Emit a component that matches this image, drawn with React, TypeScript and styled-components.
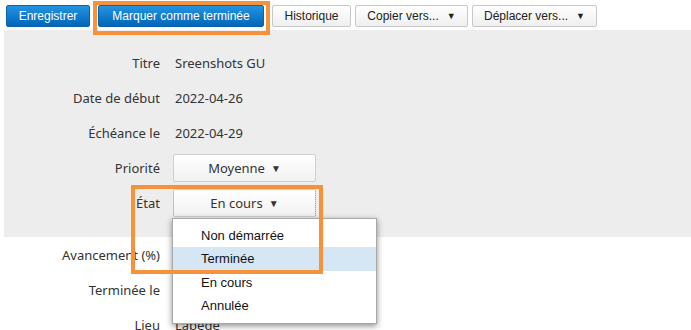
import styled, { createGlobalStyle } from 'styled-components'

const Global = createGlobalStyle`
  body {
    margin: 0;
    background: #fff;
  }
`

const Page = styled.div`
  position: relative;
  width: 691px;
  height: 330px;
  overflow: hidden;
  padding: 5px 0 0 4px;
  box-sizing: border-box;
`

const Toolbar = styled.div`
  display: flex;
  gap: 4px;
  padding-left: 2px;
  height: 22px;
`

const Button = styled.button<{ $w: number; $primary?: boolean; $mx?: number }>`
  width: ${p => p.$w}px;
  height: 22px;
  margin: 0 ${p => p.$mx ?? 0}px;
  padding: 0;
  box-sizing: border-box;
  border-radius: 2px;
  font-family: 'Liberation Sans', Arial, sans-serif;
  font-size: 12px;
  display: flex;
  align-items: center;
  justify-content: center;
  gap: 8px;
  cursor: pointer;
  ${p =>
    p.$primary
      ? `
    color: #fff;
    border: 1px solid #0b62ad;
    background: linear-gradient(#2394e0, #0166b8);
  `
      : `
    color: #222;
    border: 1px solid #c8c8c8;
    background: linear-gradient(#ffffff, #efefef);
  `}
`

const Arrow = styled.span<{ $size?: number }>`
  font-size: ${p => p.$size ?? 9}px;
  line-height: 1;
`

const Panel = styled.div`
  margin-top: 3px;
  background: #ededed;
  padding: 15px 0 17px;
`

const Row = styled.div`
  display: grid;
  grid-template-columns: 156px 1fr;
  column-gap: 13px;
  align-items: center;
  height: 35px;
  font-family: 'Noto Sans', 'Open Sans', sans-serif;
  font-size: 13px;
  color: #333;
`

const Label = styled.div`
  text-align: right;
`

const Value = styled.div`
  padding-left: 2px;
`

const SelectWrap = styled.div`
  position: relative;
  width: 143px;
`

const Select = styled.div<{ $focused?: boolean }>`
  height: 28px;
  box-sizing: border-box;
  border: 1px solid #cfcfcf;
  border-radius: 2px;
  background: linear-gradient(#ffffff, #f1f1f1);
  display: flex;
  align-items: center;
  justify-content: center;
  gap: 6px;
  color: #333;
  ${p =>
    p.$focused &&
    `
    border-left: 1px dotted #888;
    border-right: 1px dotted #888;
  `}
`

const Menu = styled.div`
  position: absolute;
  top: 29px;
  left: -1px;
  width: 205px;
  background: #fff;
  border: 1px solid #a9a9a9;
  box-shadow: 0 2px 6px rgba(0, 0, 0, 0.45);
  padding: 5px 0;
  box-sizing: border-box;
  z-index: 2;
`

const Item = styled.div<{ $active?: boolean }>`
  height: 23.5px;
  display: flex;
  align-items: center;
  padding-left: 28px;
  font-family: 'Liberation Sans', Arial, sans-serif;
  font-size: 13px;
  color: #111;
  background: ${p => (p.$active ? '#d5e7f5' : 'transparent')};
`

const Highlight = styled.div<{ $x: number; $y: number; $w: number; $h: number }>`
  position: absolute;
  left: ${p => p.$x}px;
  top: ${p => p.$y}px;
  width: ${p => p.$w}px;
  height: ${p => p.$h}px;
  box-sizing: border-box;
  border: 4px solid #f7923a;
  z-index: 3;
  pointer-events: none;
`

const states = ['Non démarrée', 'Terminée', 'En cours', 'Annulée']

export default function App() {
  return (
    <Page>
      <Global />
      <Toolbar>
        <Button $w={84} $primary>
          Enregistrer
        </Button>
        <Button $w={166} $primary $mx={4}>
          Marquer comme terminée
        </Button>
        <Button $w={79}>Historique</Button>
        <Button $w={113}>
          Copier vers... <Arrow>▼</Arrow>
        </Button>
        <Button $w={125}>
          Déplacer vers... <Arrow>▼</Arrow>
        </Button>
      </Toolbar>
      <Panel>
        <Row>
          <Label>Titre</Label>
          <Value>Sreenshots GU</Value>
        </Row>
        <Row>
          <Label>Date de début</Label>
          <Value>2022-04-26</Value>
        </Row>
        <Row>
          <Label>Échéance le</Label>
          <Value>2022-04-29</Value>
        </Row>
        <Row>
          <Label>Priorité</Label>
          <SelectWrap>
            <Select>
              Moyenne <Arrow $size={10}>▼</Arrow>
            </Select>
          </SelectWrap>
        </Row>
        <Row>
          <Label>État</Label>
          <SelectWrap>
            <Select $focused>
              En cours <Arrow $size={10}>▼</Arrow>
            </Select>
            <Menu>
              {states.map(s => (
                <Item key={s} $active={s === 'Terminée'}>
                  {s}
                </Item>
              ))}
            </Menu>
          </SelectWrap>
        </Row>
      </Panel>
      <Row>
        <Label>Avancement (%)</Label>
        <Value />
      </Row>
      <Row>
        <Label>Terminée le</Label>
        <Value />
      </Row>
      <Row>
        <Label>Lieu</Label>
        <Value>Labège</Value>
      </Row>
      <Highlight $x={93} $y={1} $w={177} $h={34} />
      <Highlight $x={131} $y={185} $w={192} $h={89} />
    </Page>
  )
}
